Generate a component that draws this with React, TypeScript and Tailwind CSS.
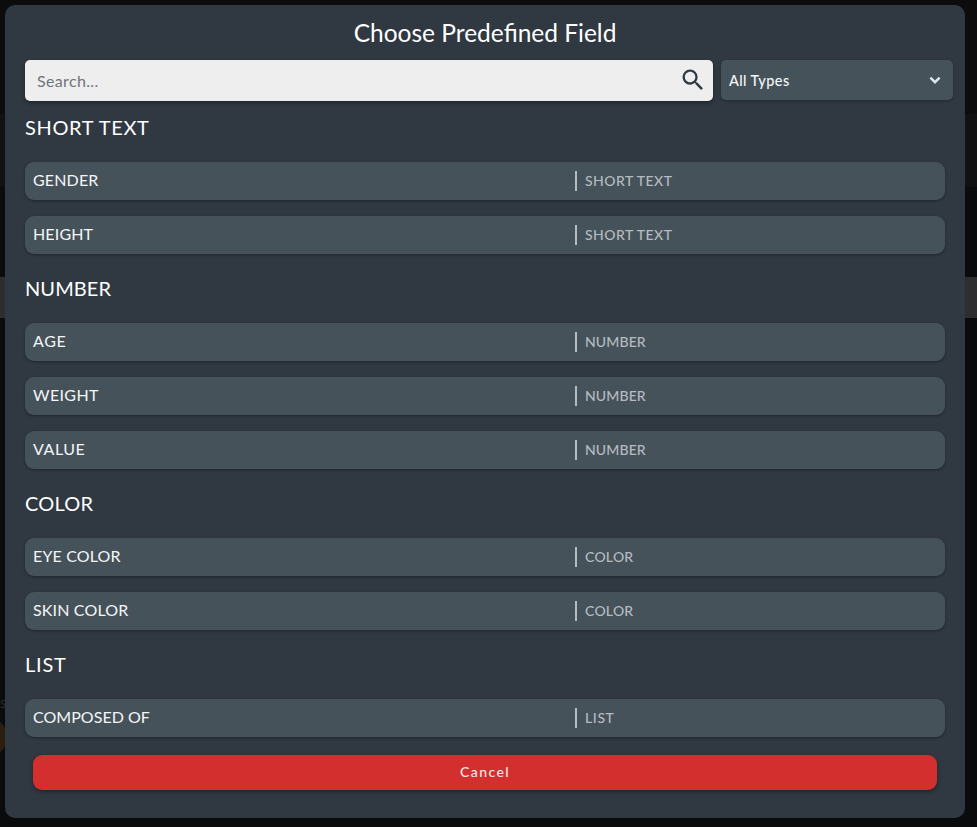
import React from "react";

type Field = { name: string; track: string };
type Group = { type: string; headTrack: string; typeTrack: string; fields: Field[] };

const groups: Group[] = [
  {
    type: "SHORT TEXT",
    headTrack: "tracking-[0.65px]",
    typeTrack: "tracking-[0.45px]",
    fields: [
      { name: "GENDER", track: "tracking-[0.15px]" },
      { name: "HEIGHT", track: "tracking-[0.15px]" },
    ],
  },
  {
    type: "NUMBER",
    headTrack: "tracking-[0.08px]",
    typeTrack: "tracking-[0.12px]",
    fields: [
      { name: "AGE", track: "tracking-[0.6px]" },
      { name: "WEIGHT", track: "tracking-[0.35px]" },
      { name: "VALUE", track: "tracking-[0.55px]" },
    ],
  },
  {
    type: "COLOR",
    headTrack: "tracking-[0.2px]",
    typeTrack: "tracking-[0.25px]",
    fields: [
      { name: "EYE COLOR", track: "tracking-[0.15px]" },
      { name: "SKIN COLOR", track: "tracking-[0.15px]" },
    ],
  },
  {
    type: "LIST",
    headTrack: "tracking-[0.8px]",
    typeTrack: "tracking-[0.6px]",
    fields: [{ name: "COMPOSED OF", track: "tracking-[0.03px]" }],
  },
];

function Backdrop() {
  return (
    <div className="flex h-full flex-col bg-[#0a0b0c]">
      <div className="h-[114px] bg-[#0c0c0d]" />
      <div className="h-[73px] bg-[#111112]" />
      <div className="h-[90px]" />
      <div className="h-[41px] bg-[#2e2e2e]" />
      <div className="mt-[378px] h-4 text-[11px] leading-4 text-[#2c2c2c]">S</div>
      <div className="-ml-[35px] mt-[4px] size-[42px] rounded-full bg-[#2c1f12]" />
    </div>
  );
}

function FieldRow({ field, group }: { field: Field; group: Group }) {
  return (
    <div className="flex h-[38px] items-center rounded-[9px] bg-[#46525a] px-2 shadow-[0_1px_3px_rgba(0,0,0,0.35)]">
      <span className={`w-[542px] pb-[2px] text-[16px] leading-6 text-[#f4f6f7] ${field.track}`}>{field.name}</span>
      <span className="flex h-5 items-center border-l-2 border-[#b4bcc3] pl-2">
        <span className={`pb-[2px] text-[14px] font-medium text-[#b4bbc0] ${group.typeTrack}`}>{group.type}</span>
      </span>
    </div>
  );
}

export default function App() {
  return (
    <div className="relative h-[827px] w-[977px] overflow-hidden font-['Lato','Noto_Sans',sans-serif]">
      <Backdrop />
      <div className="absolute left-[5px] top-[5px] flex h-[813px] w-[960px] flex-col rounded-[10px] bg-[#303841] pl-5">
        <h1 className="mr-5 mt-[13px] h-[30px] text-center text-[24.5px] leading-[30px] text-white">
          <span className="tracking-[0px]">Choose Predefined Field</span>
        </h1>
        <div className="mt-[12px] flex h-[41px] gap-2">
          <div className="flex w-[688px] items-center justify-between rounded-[5px] bg-[#eee] pl-3 pr-[6px] shadow-[0_2px_4px_rgba(0,0,0,0.35)]">
            <span className="text-[16px] leading-6 tracking-[0.35px] text-[#70757a]">Search...</span>
            <svg viewBox="0 0 24 24" className="mb-[1px] size-[28px] fill-[#303841]">
              <path d="M15.5 14h-.79l-.28-.27A6.471 6.471 0 0 0 16 9.5 6.5 6.5 0 1 0 9.5 16c1.61 0 3.09-.59 4.23-1.57l.27.28v.79l5 4.99L20.49 19l-4.99-5zm-6 0C7.01 14 5 11.99 5 9.5S7.01 5 9.5 5 14 7.01 14 9.5 11.99 14 9.5 14z" />
            </svg>
          </div>
          <div className="flex h-10 w-[232px] items-center justify-between rounded-[5px] bg-[#46525a] pl-2 pr-3 shadow-[0_1px_3px_rgba(0,0,0,0.3)]">
            <span className="pt-[1px] text-[14.5px] font-medium tracking-[0.4px] text-[#f4f6f7]">All Types</span>
            <svg viewBox="0 0 12 12" className="size-3 fill-none stroke-[#dce8ee] stroke-[2.4]">
              <path d="M1.4 3.6 6 8.2 10.6 3.6" />
            </svg>
          </div>
        </div>
        {groups.map((g, i) => (
          <section key={g.type} className={i === 0 ? "mt-[12px]" : "mt-[20px]"}>
            <h2 className={`h-7 text-[20px] leading-7 text-white ${g.headTrack}`}>{g.type}</h2>
            <div className="mt-[21px] flex w-[920px] flex-col gap-4">
              {g.fields.map((f) => (
                <FieldRow key={f.name} field={f} group={g} />
              ))}
            </div>
          </section>
        ))}
        <button className="ml-2 mt-[18px] h-[35px] w-[904px] shrink-0 rounded-[9px] bg-[#d32f2f] pb-[2px] text-[14px] font-medium tracking-[1.4px] text-[#fbe9e9] shadow-[0_2px_4px_rgba(0,0,0,0.35)]">
          Cancel
        </button>
      </div>
    </div>
  );
}
